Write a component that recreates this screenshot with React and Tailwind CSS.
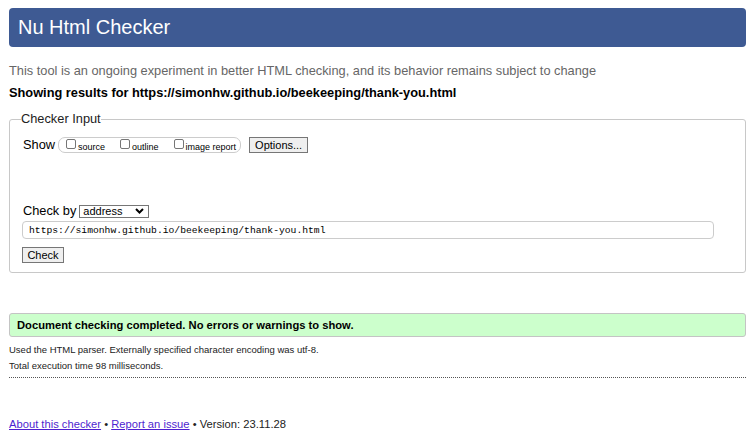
import React from 'react';

const Box = ({ label }) => (
    <label className="flex items-start gap-[2px] mr-[15px] last:mr-0">
        <span className="mt-[1px] w-[10px] h-[10px] border border-[#767676] rounded-[2px] bg-white" />
        <span className="text-[9px] leading-[9px] mt-[5px]">{label}</span>
    </label>
);

export default function App() {
    return (
        <div className="w-[755px] h-[436px] bg-white text-black overflow-hidden font-['Liberation_Sans',Arial,sans-serif]">
            <div className="pt-2 px-[9px]">
                <h1 className="h-[39px] bg-[#3e5a93] rounded-[4px] text-white text-[20px] leading-[39px] pl-[9px]">
                    Nu Html Checker
                </h1>
            </div>

            <p className="mt-[15px] ml-[9px] text-[12.8px] leading-[18px] text-[#666]">
                This tool is an ongoing experiment in better HTML checking, and its behavior remains subject to change
            </p>
            <p className="mt-[4px] ml-[9px] text-[12.8px] leading-[18px] font-bold">
                Showing results for https://simonhw.github.io/beekeeping/thank-you.html
            </p>

            <fieldset className="mt-[8px] mx-[9px] border border-[#c8c8c8] rounded-[3px] pl-[13px] pr-[30px] pb-[9px]">
                <legend className="-ml-[2px] text-[12.8px] leading-[18px] text-[#222]">Checker Input</legend>

                <div className="mt-[9px] flex items-center h-[16px]">
                    <span className="text-[12.8px] leading-[16px] mr-[3px]">Show</span>
                    <div className="flex items-center h-[16px] border border-[#ccc] rounded-[7px] pl-[7px] pr-[4px]">
                        <Box label="source" />
                        <Box label="outline" />
                        <Box label="image report" />
                    </div>
                    <button className="ml-[8px] h-[16px] px-[5px] bg-[#efefef] border border-[#767676] text-[11px] leading-[14px]">
                        Options...
                    </button>
                </div>

                <div className="mt-[51px] flex items-center h-[14px]">
                    <span className="text-[12.8px] leading-[14px] mr-[3px]">Check by</span>
                    <div className="flex items-center justify-between w-[70px] h-[13px] border border-[#767676] pl-[3px] pr-[4px]">
                        <span className="text-[11px] leading-[11px]">address</span>
                        <svg width="9" height="6" viewBox="0 0 9 6">
                            <path d="M1 1 L4.5 4.5 L8 1" fill="none" stroke="#000" strokeWidth="2" />
                        </svg>
                    </div>
                </div>

                <div className="mt-[3px] -ml-[1px] w-[692px] h-[18px] border border-[#ccc] rounded-[4px] pl-[6px] flex items-center">
                    <span className="font-['Liberation_Mono','DejaVu_Sans_Mono',monospace] text-[9.7px] leading-[11px]">
                        https://simonhw.github.io/beekeeping/thank-you.html
                    </span>
                </div>

                <button className="mt-[8px] -ml-[1px] block h-[16px] w-[42px] bg-[#efefef] border border-[#767676] text-[11px] leading-[14px]">
                    Check
                </button>
            </fieldset>

            <div className="mt-[40px] mx-[9px] h-[24px] bg-[#ccffcc] border border-[#c4c4c4] rounded-[3px] pl-[7px] flex items-center">
                <span className="text-[11.2px] font-bold">Document checking completed. No errors or warnings to show.</span>
            </div>

            <p className="mt-[5px] ml-[9px] text-[9.5px] leading-[16px] text-[#222]">
                Used the HTML parser. Externally specified character encoding was utf-8.
            </p>
            <p className="ml-[9px] text-[9.5px] leading-[16px] text-[#222]">Total execution time 98 milliseconds.</p>
            <div className="mt-[3px] mx-[9px] border-t border-dotted border-[#555]" />

            <p className="mt-[38px] ml-[9px] text-[11.2px] leading-[16px] text-[#222]">
                <a href="#" className="text-[#4e1fd0] underline">About this checker</a>
                {' • '}
                <a href="#" className="text-[#4e1fd0] underline">Report an issue</a>
                {' • Version: 23.11.28'}
            </p>
        </div>
    );
}
